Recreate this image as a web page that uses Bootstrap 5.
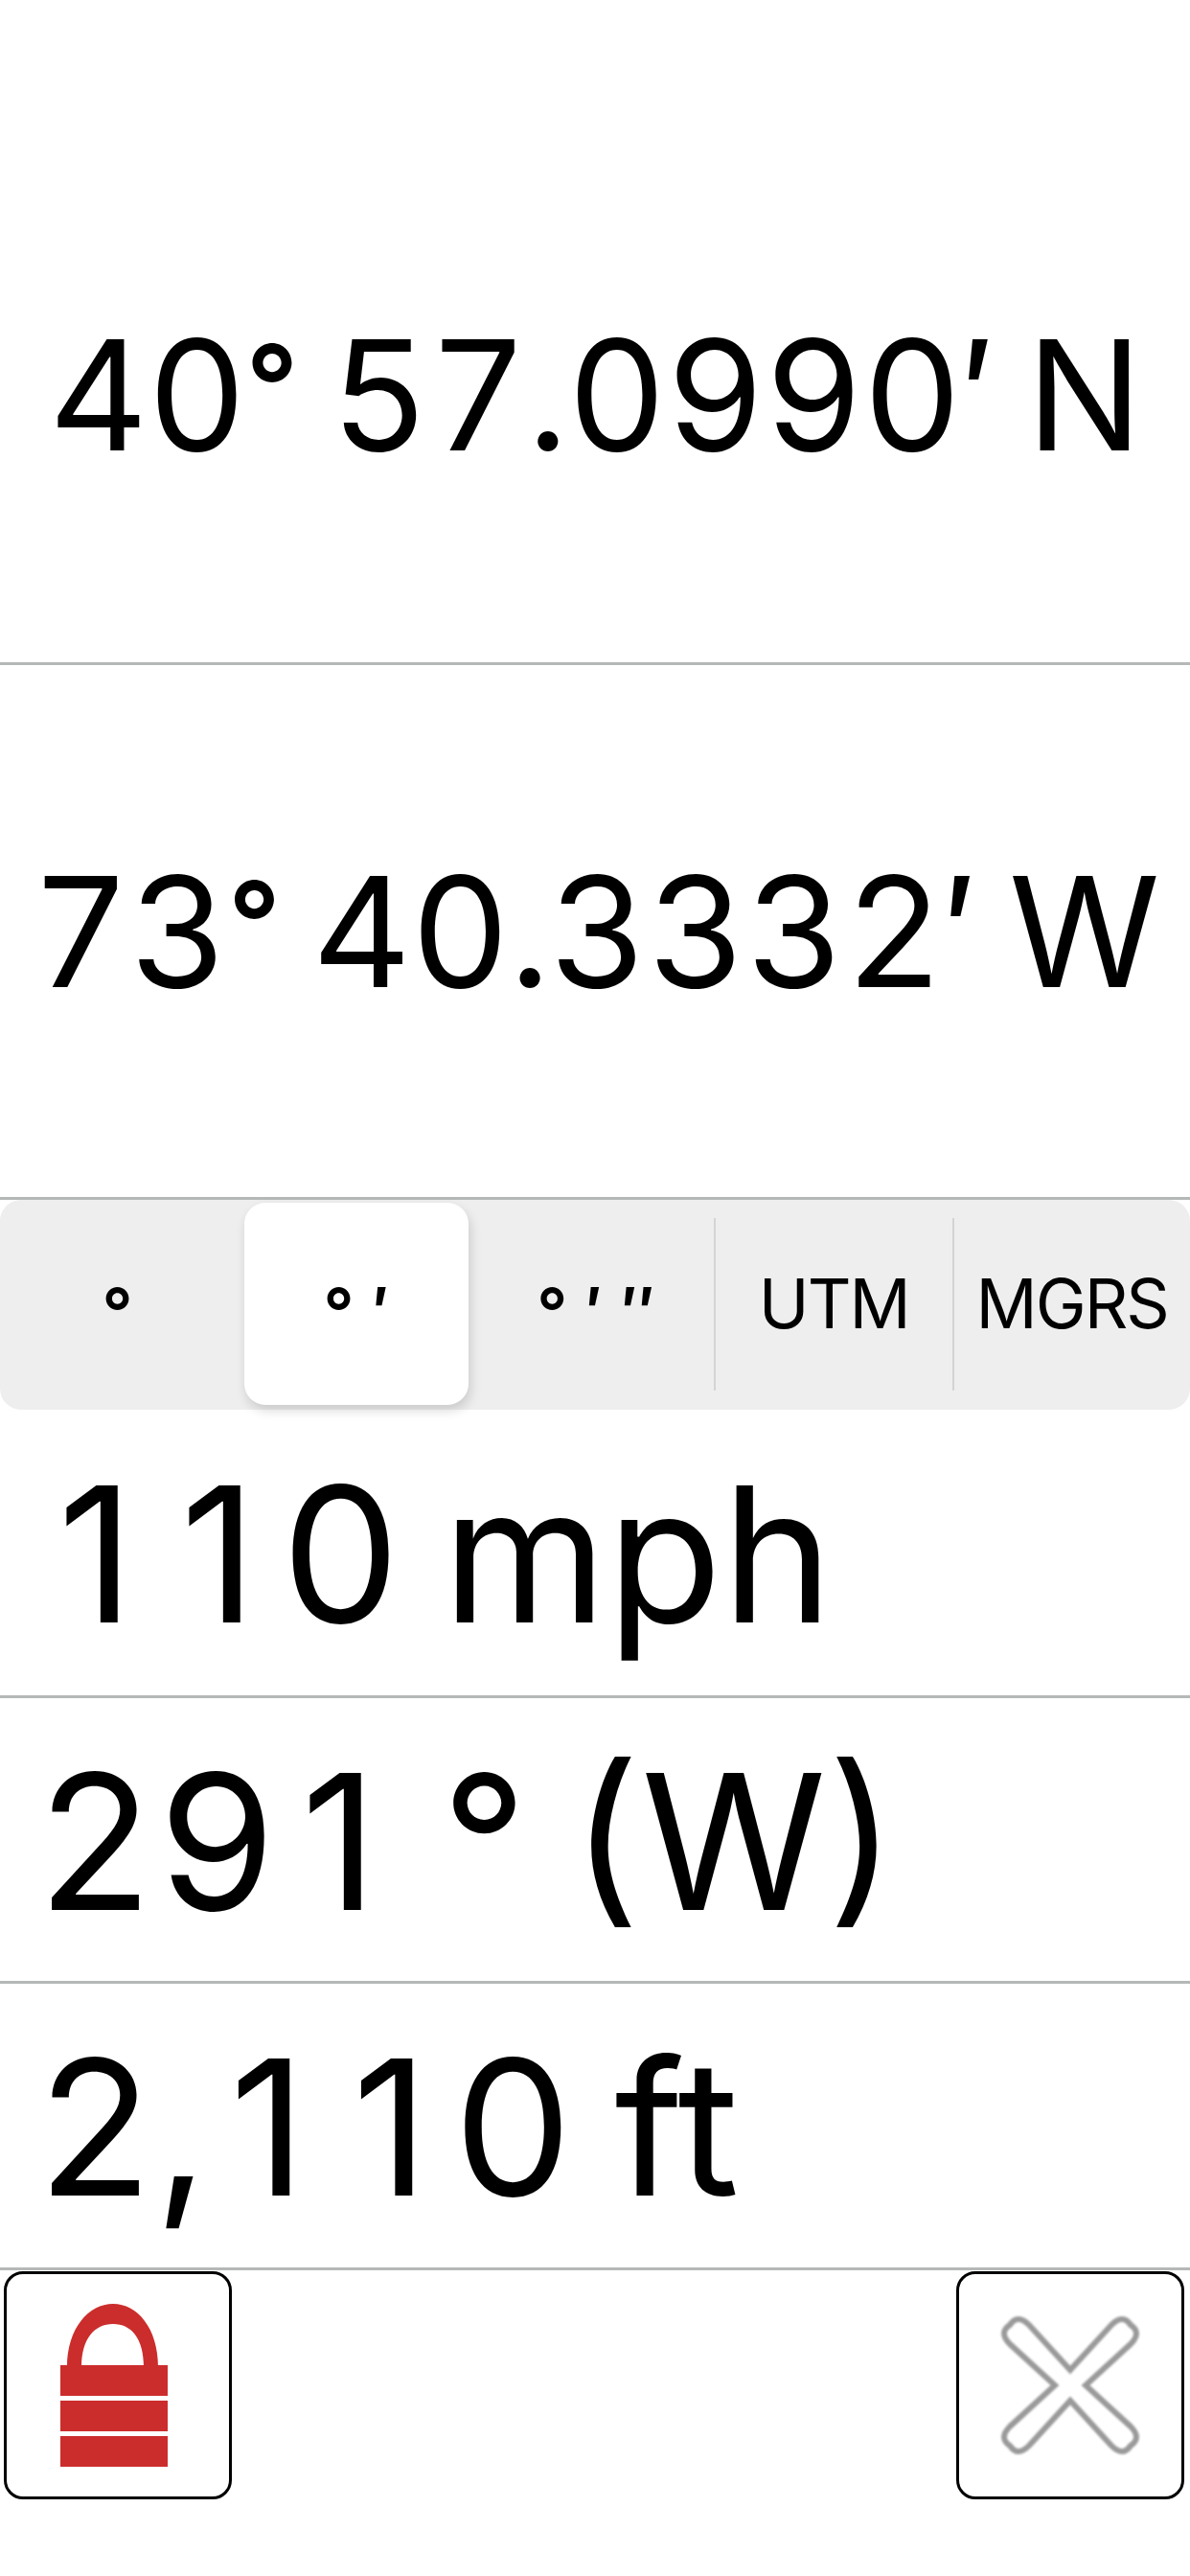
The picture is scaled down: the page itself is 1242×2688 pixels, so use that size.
<!DOCTYPE html>
<html lang="en">
<head>
    <meta charset="UTF-8">
    <title>GPS</title>
    <link href="https://cdn.jsdelivr.net/npm/bootstrap@5.3.0/dist/css/bootstrap.min.css" rel="stylesheet">
    <style>
        body { font-family: Inter, "Liberation Sans", sans-serif; font-feature-settings: "tnum"; color: #000; background: #fff; width: 1242px; height: 2688px; overflow: hidden; }
        .coord-row { font-size: 160px; line-height: 1; letter-spacing: -1px; word-spacing: -8px; white-space: nowrap; }
        .coord-lat { height: 691px; padding-top: 132px; }
        .coord-lon { height: 555px; }
        .coord-deg { font-size: 120px; font-weight: 600; line-height: 0; vertical-align: 24px; }
        .rule-line { height: 3px; background: #b4b8b6; }
        .fmt-bar { height: 219px; background: #eeeeee; border-radius: 22px; padding: 3px 0 5px; }
        .fmt-item { font-size: 71px; letter-spacing: -2px; line-height: 1; }
        .fmt-mark { font-size: 70px; font-weight: 600; line-height: 1; padding-top: 16px; }
        .fmt-first { width: 245px; }
        .fmt-on { width: 234px; margin: 0 10px; background: #fff; border-radius: 22px; box-shadow: 2px 6px 12px rgba(0,0,0,.15); }
        .fmt-third { width: 246px; }
        .fmt-sep { width: 2px; height: 180px; background: #d4d4d4; flex: none; }
        .fmt-wide { flex: 1 1 0; }
        .big-row { height: 295px; font-size: 196px; line-height: 1; padding: 4px 0 0 36px; word-spacing: -10px; white-space: nowrap; }
        .big-first { height: 298px; }
        .big-last { height: 296px; }
        .digit-one { display: inline-block; width: 128px; text-align: center; font-feature-settings: "tnum" 0; }
        .btn-row { padding: 1px 6px 0 4px; }
        .sq-btn { width: 238px; height: 238px; padding: 0; background: #fff; border: 3px solid #000; border-radius: 20px; }
        .x-icon { filter: blur(1.2px); }
    </style>
</head>
<body>
    <div class="d-flex align-items-center justify-content-center coord-row coord-lat"><span>40<span class="coord-deg">°</span> 57.0990′ N</span></div>
    <div class="rule-line"></div>
    <div class="d-flex align-items-center justify-content-center coord-row coord-lon"><span>73<span class="coord-deg">°</span> 40.3332′ W</span></div>
    <div class="rule-line"></div>

    <div class="d-flex align-items-stretch fmt-bar">
        <div class="d-flex align-items-center justify-content-center fmt-mark fmt-first">°</div>
        <div class="d-flex align-items-center justify-content-center fmt-mark fmt-on">° ′</div>
        <div class="d-flex align-items-center justify-content-center fmt-mark fmt-third">° ′ ″</div>
        <div class="fmt-sep align-self-center"></div>
        <div class="d-flex align-items-center justify-content-center fmt-item fmt-wide">UTM</div>
        <div class="fmt-sep align-self-center"></div>
        <div class="d-flex align-items-center justify-content-center fmt-item fmt-wide">MGRS</div>
    </div>

    <div class="d-flex align-items-center big-row big-first"><span><span class="digit-one">1</span><span class="digit-one">1</span>0 mph</span></div>
    <div class="rule-line"></div>
    <div class="d-flex align-items-center big-row"><span>29<span class="digit-one">1</span> ° (W)</span></div>
    <div class="rule-line"></div>
    <div class="d-flex align-items-center big-row big-last"><span>2,<span class="digit-one">1</span><span class="digit-one">1</span>0 ft</span></div>
    <div class="rule-line"></div>

    <div class="d-flex justify-content-between btn-row">
        <button class="sq-btn d-flex align-items-center justify-content-center" type="button" aria-label="Lock">
            <svg class="me-2" width="112" height="170" viewBox="0 0 112 170">
                <path d="M7 66 C7 25 30 0 55 0 C80 0 102 25 102 66 L87 66 C87 36 74 21 55 21 C36 21 22 36 22 66 Z" fill="#cb2d2c"/>
                <rect x="0" y="64" width="112" height="32" fill="#cb2d2c"/>
                <rect x="0" y="101" width="112" height="32" fill="#cb2d2c"/>
                <rect x="0" y="138" width="112" height="32" fill="#cb2d2c"/>
            </svg>
        </button>
        <button class="sq-btn d-flex align-items-center justify-content-center" type="button" aria-label="Close">
            <svg class="x-icon" width="150" height="150" viewBox="0 0 150 150">
                <path d="M75 59 L118 12 Q130 0 138 12 Q150 20 138 32 L91 75 L138 118 Q150 130 138 138 Q130 150 118 138 L75 91 L32 138 Q20 150 12 138 Q0 130 12 118 L59 75 L12 32 Q0 20 12 12 Q20 0 32 12 Z" fill="#fff" stroke="#9a9a9a" stroke-width="6"/>
            </svg>
        </button>
    </div>
    <script src="https://cdn.jsdelivr.net/npm/bootstrap@5.3.0/dist/js/bootstrap.bundle.min.js"></script>
</body>
</html>
